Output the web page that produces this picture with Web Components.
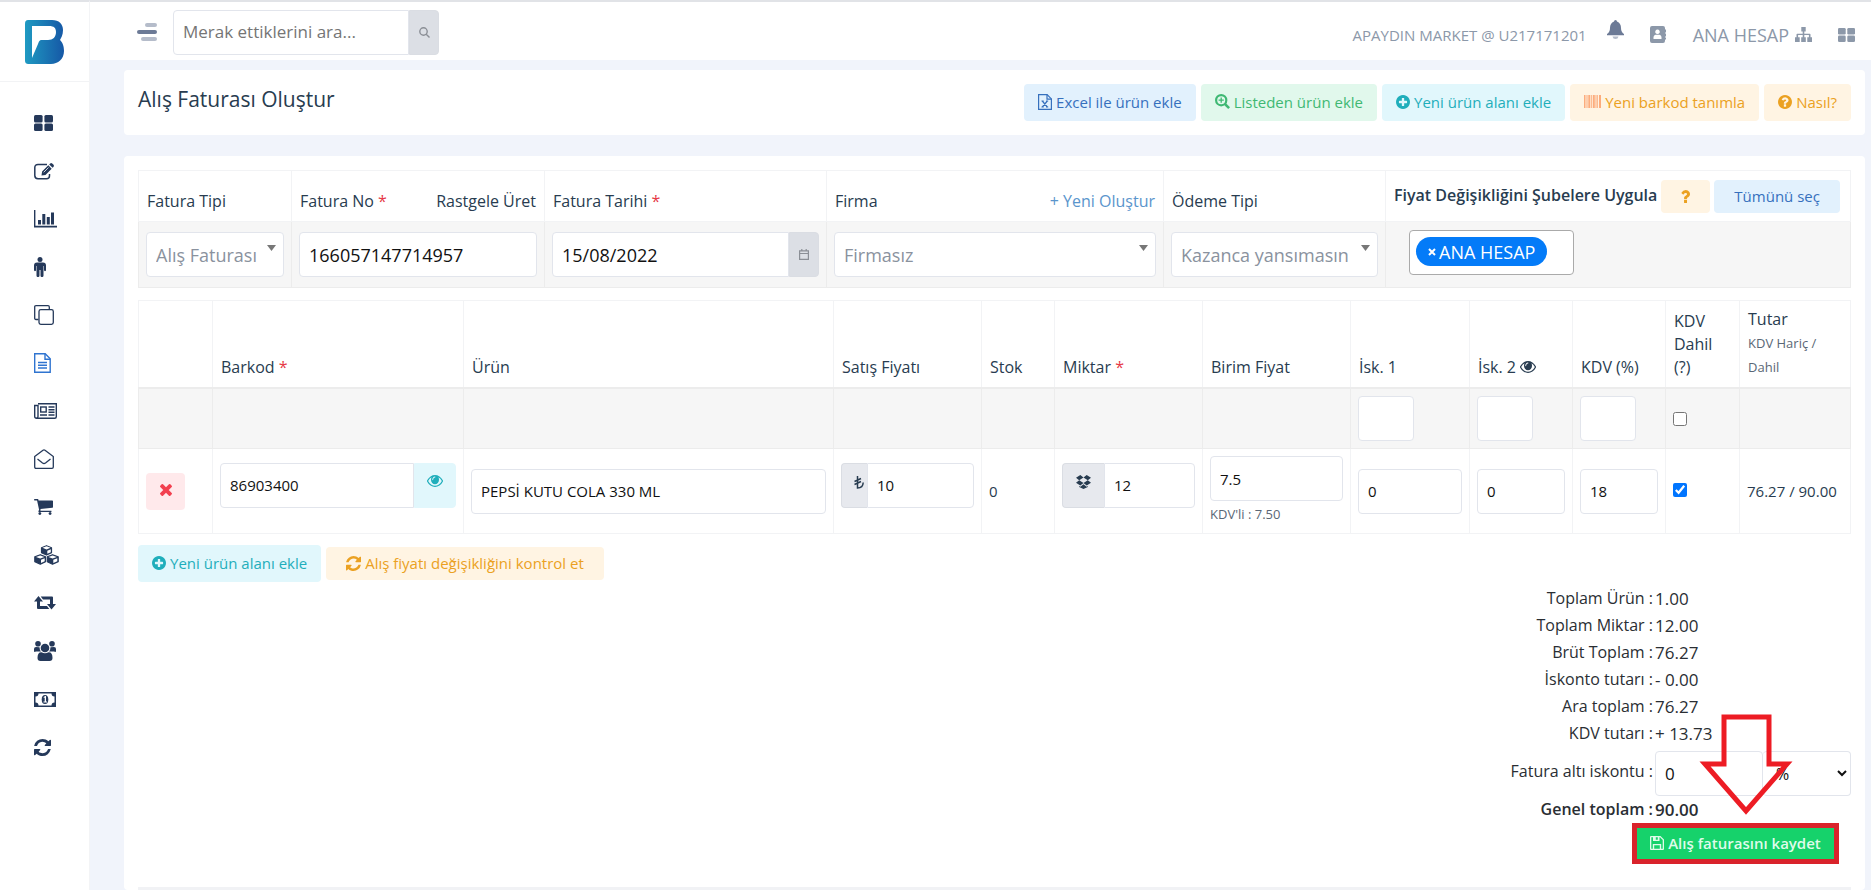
<!DOCTYPE html>
<html lang="tr">
<head>
<meta charset="utf-8">
<title>Alış Faturası Oluştur</title>
<style>
  body { margin: 0; background: #f1f4fb; color: #283c50; font-family: "Open Sans", "Noto Sans", sans-serif; font-size: 16px; line-height: 24px; }
</style>
</head>
<body>
<app-shell>
  <app-sidebar slot="sidebar"></app-sidebar>
  <app-header slot="header"></app-header>
  <page-card>
    <page-title></page-title>
  </page-card>
  <page-card>
    <invoice-head></invoice-head>
    <invoice-items></invoice-items>
    <invoice-actions></invoice-actions>
    <invoice-totals></invoice-totals>
  </page-card>
</app-shell>

<script>
/* Shared rules for form controls, included in each shadow root that needs them. */
const CONTROLS = `
  * { box-sizing: border-box; }
  input, select, button { font: inherit; color: inherit; margin: 0; }
  input[type=text], select { display: block; width: 100%; min-width: 0; height: 45px; padding: 0 9px; border: 1px solid #e2e5ec; border-radius: 4px; background: #fff; color: #111; outline: 0; }
  input[type=checkbox] { display: block; width: 14px; height: 14px; }
  .group { display: flex; }
  .group > .addon { flex: none; display: flex; align-items: center; justify-content: center; height: 45px; padding: 0; border: 1px solid #dadde3; background: #dcdfe5; color: #8b8f96; }
  .addon:last-child { border-radius: 4px; }
  .addon:first-child { border-radius: 4px; border-right: 0; }
  .group > :first-child { border-top-right-radius: 0; border-bottom-right-radius: 0; }
  .group > :last-child { border-top-left-radius: 0; border-bottom-left-radius: 0; }
`;
const TABLE = `
  table { width: 100%; border-collapse: collapse; table-layout: fixed; }
  th, td { border: 1px solid #f2f3f5; padding: 7px; text-align: left; }
  th { font-weight: 400; padding: 7px 8px 8px; vertical-align: bottom; color: #283c50; }
  i { font-style: normal; color: #e63946; }
`;

function define(name, css, html) {
  const template = document.createElement("template");
  template.innerHTML = `<style>${css}</style>${html}`;
  customElements.define(name, class extends HTMLElement {
    constructor() {
      super();
      this.attachShadow({ mode: "open" }).append(template.content.cloneNode(true));
    }
  });
}

/* name: [width, height, viewBox, markup] */
const REFRESH = '<path d="M1639 1056q0 5-1 7-64 268-268 434.5t-478 166.5q-146 0-282.500-55t-243.500-157l-129 129q-19 19-45 19t-45-19-19-45v-448q0-26 19-45t45-19h448q26 0 45 19t19 45-19 45l-137 137q71 66 161 102t187 36q134 0 250-65t186-179q11-17 53-117 8-23 30-23h192q13 0 22.500 9.500t9.500 22.500zm25-800v448q0 26-19 45t-45 19h-448q-26 0-45-19t-19-45 19-45l138-138q-148-137-349-137-134 0-250 65t-186 179q-11 17-53 117-8 23-30 23h-199q-13 0-22.500-9.500t-9.500-22.500v-7q65-268 270-434.500t480-166.500q146 0 284 55.500t245 156.500l130-129q19-19 45-19t45 19 19 45z"/>';
const EYE = '<path d="M1664 960q-152-236-381-353 61 104 61 225 0 185-131.500 316.500t-316.500 131.500-316.500-131.500-131.500-316.500q0-121 61-225-229 117-381 353 133 205 333.500 326.500t434.500 121.500 434.500-121.500 333.500-326.500zm-720-384q0-20-14-34t-34-14q-125 0-214.500 89.500t-89.500 214.500q0 20 14 34t34 14 34-14 14-34q0-86 61-147t147-61q20 0 34-14t14-34zm848 384q0 34-20 69-140 230-376.500 368.500t-499.500 138.500-499.500-139-376.500-368q-20-35-20-69t20-69q140-229 376.500-368t499.500-139 499.500 139 376.500 368q20 35 20 69z"/>';
const GRID = '<rect width="8.600" height="7.400" rx="1.500"/><rect x="10.400" width="8.600" height="7.400" rx="1.500"/><rect y="8.600" width="8.600" height="7.400" rx="1.500"/><rect x="10.400" y="8.600" width="8.600" height="7.400" rx="1.500"/>';
const FULL = "128 128 1536 1536";
const ICONS = {
  logo: [39, 44, "0 0 39 44", '<defs><linearGradient id="g" x1="0" y1="0" x2="1" y2="0"><stop offset="0" stop-color="#1f9ac2"/><stop offset="1" stop-color="#1658a6"/></linearGradient></defs><path fill="url(#g)" d="M3 0h24c7 0 11 4 11 10 0 5-2 8-3 10 2 2 4 5 4 11 0 8-6 13-13 13H4c-3 0-4-1-4-4V4c0-3 1-4 3-4z"/><path fill="#fff" d="M7 6h17c5 0 7 2 7 6 0 5-3 8-8 8h-6c-3 0-3 2-4 4L7 38z"/>'],
  menu: [20, 18, "0 0 20 18", '<rect x="8" width="12" height="4" rx="2" opacity=".5"/><rect y="7" width="20" height="4" rx="2"/><rect x="4" y="14" width="16" height="4" rx="2" opacity=".5"/>'],
  search: [11, 11, "0 0 11 11", '<g fill="none" stroke="currentColor" stroke-width="1.400"><circle cx="4.500" cy="4.500" r="3.700"/><path d="M7.200 7.200L10.500 10.500"/></g>'],
  grid: [19, 16, "0 0 19 16", GRID],
  gridSmall: [17, 14, "0 0 19 16", GRID],
  edit: [20, 17, "0 0 20 17", '<path fill="none" stroke="currentColor" stroke-width="1.500" d="M13 1.500H4C2 1.500.800 2.500.800 4.500v8C.800 14.500 2 15.700 4 15.700h8.500c2 0 3-1.200 3-3V11"/><path d="M7.500 12.500l.600-4L14.300 2.300l3.400 3.400-6.200 6.200zM15.200 1.400l1-1q1-.700 2 0l1.400 1.400q.700 1 0 2l-1 1z"/><path stroke="#fff" stroke-width=".800" d="M9.700 9.300L14.500 4.500"/>'],
  chart: [23, 18, "0 0 23 18", '<path d="M0 0h1.400v15.800H23V17.500H0zM4 10h3v4.500H4zM8.300 4h3v10.500h-3zM12.800 7h3v7.500h-3zM17 2.500h3v12h-3z"/>'],
  male: [12, 20, "0 0 12 20", '<circle cx="6" cy="2.500" r="2.500"/><path d="M3 5.500h6c2 0 3 1 3 3V13c0 1.600-2 1.600-2 0V9h-.500v9.500c0 2-3 2-3 0V13h-1v5.500c0 2-3 2-3 0V9H2v4c0 1.600-2 1.600-2 0V8.500c0-2 1-3 3-3z"/>'],
  copy: [20, 20, "0 0 20 20", '<g fill="none" stroke="currentColor" stroke-width="1.300"><rect x="5" y="4.700" width="14.300" height="14.600" rx="1.800"/><path d="M4.500 14.500H2c-1 0-1.300-.500-1.300-1.300V2C.700 1 1 .700 2 .700h12c1 0 1.300.500 1.300 1.300v2"/></g>'],
  file: [17, 20, "0 0 17 20", '<g fill="none" stroke="currentColor" stroke-width="1.400"><path d="M.700.700h10.500l5 5v13.500H.700z"/><path d="M11 .700v5.500h5.300M4 9.500h9M4 12.300h9M4 15h9"/></g>'],
  news: [23, 16, "0 0 23 16", '<g fill="none" stroke="currentColor" stroke-width="1.400"><path d="M4 .700h18.300v13q0 1.500-1.500 1.500H2.500Q.700 15.200.700 13.500V2.500H4v11q0 1.500-1.500 1.500"/><rect x="6.700" y="4" width="5.500" height="5"/><path d="M6 12h7M14.500 4h6M14.500 6.700h6M14.500 9.300h6M14.500 12h6"/></g>'],
  mail: [20, 20, "0 0 20 20", '<g fill="none" stroke="currentColor" stroke-width="1.300"><path d="M.700 7.500L9 1.200q1-.700 2 0l8.300 6.300V18q0 1.300-1.300 1.300H2Q.700 19.300.700 18z"/><path d="M3.500 10l5 4q1.500 1 3 0l5-4"/></g>'],
  cart: [19, 16, "64 256 1664 1408", '<path d="M704 1536q0 52-38 90t-90 38-90-38-38-90 38-90 90-38 90 38 38 90zm896 0q0 52-38 90t-90 38-90-38-38-90 38-90 90-38 90 38 38 90zm128-1088v512q0 24-16.500 42.500t-40.500 21.500l-1044 122q13 60 13 70 0 16-24 64h920q26 0 45 19t19 45-19 45-45 19h-1024q-26 0-45-19t-19-45q0-11 8-31.500t16-36 21.500-40 15.500-29.500l-177-823h-204q-26 0-45-19t-19-45 19-45 45-19h256q16 0 28.500 6.500t19.500 15.500 13 24.500 8 26 5.500 29.500 4.500 26h1201q26 0 45 19t19 45z"/>'],
  cubes: [25, 20, "0 0 25 20", '<g stroke="currentColor" stroke-width="1.200" stroke-linejoin="round"><path d="M12.500.700L17.500 2.700v5l-5 2.300-5-2.300v-5z"/><path d="M6.300 9.700l5.200 2v5l-5.200 2.500-5.500-2.500v-5z"/><path d="M18.500 9.700l5.700 2v5l-5.700 2.500-5.200-2.500v-5z"/></g><g fill="#fff"><path d="M12.500 1.300l4 1.500-4 1.700-4-1.700zM6.200 10.400l4.200 1.500-4.200 1.700-4.200-1.700zM18.600 10.400l4.200 1.500-4.200 1.700-4.200-1.700zM13.300 5.700l3.500-1.500v3l-3.500 1.600zM7 14.800l3.700-1.500v3L7 18zM19.300 14.800l4-1.500v3l-4 1.700z"/></g>'],
  retweet: [22, 14, "0 0 22 14", '<path d="M4.500 0L9 5.500H6V10h7l2.300 3H4Q3 13 3 12V5.500H0zM17.500 13.500L13 8h3V3.500H9L6.700.500H18q1 0 1 1V8h3z"/>'],
  users: [22, 20, "0 0 22 20", '<circle cx="4" cy="2.800" r="2.800"/><circle cx="18" cy="2.800" r="2.800"/><circle cx="11" cy="7" r="4.300"/><path d="M0 10V8q0-2 2-2l3.500.300q0 2.500 1.500 4.200H2Q0 11.500 0 10zM22 10V8q0-2-2-2l-3.500.300q0 2.500-1.500 4.200h5q2 1 2-.500zM3.500 17q0-6 4-5.800 3.500 2 7 0 4-.200 4 5.800 0 3-3 3h-9q-3 0-3-3z"/>'],
  money: [22, 15, "0 0 22 15", '<path fill-rule="evenodd" d="M0 0h22v15H0zM4.500 1.500Q4.500 4.500 1.500 4.500v6q3 0 3 3h13q0-3 3-3v-6q-3 0-3-3z"/><ellipse cx="11" cy="7.500" rx="3.300" ry="4.500"/><path fill="#fff" d="M9.300 5.500L11 4h1v5.500h1v1H9.500v-1h1.200V5.800z"/>'],
  refresh: [17, 17, FULL, REFRESH],
  refreshSmall: [15, 15, FULL, REFRESH],
  bell: [17, 19, "0 0 17 19", '<path d="M7 1.500Q7 0 8.500 0T10 1.500Q14 3 14 8q0 4 3 6v1.300H0V14q3-2 3-6 0-5 4-6.500z"/><path opacity=".5" d="M5.500 16.500h6q-.500 2.500-3 2.500t-3-2.500z"/>'],
  book: [16, 17, "0 0 16 17", '<path fill-rule="evenodd" d="M2 0h11q2 0 2 2v1.500h1v3h-1v1h1v3h-1v1h1v2h-1V15q0 2-2 2H2q-2 0-2-2V2Q0 0 2 0zM7.500 3.500a2.300 2.300 0 1 0 .010 0zM3.500 13h8q.300-4-2-4.300h-4Q3.200 9 3.500 13z"/>'],
  sitemap: [17, 15, "0 0 17 15", '<path d="M6.300 0h4.400v4.400H9.300v2.300h5.500q.700 0 .700.700v2.800H17V15h-4.700v-4.800h1.600V8.100H9.300v2.100h1.500V15H6.200v-4.800h1.500V8.100H3.100v2.100h1.600V15H0v-4.800h1.500V7.400q0-.700.700-.700h5.500V4.400H6.300z"/>'],
  excel: [14, 16, "0 0 14 16", '<g fill="none" stroke="currentColor" stroke-width="1.200"><path d="M.600.600h8.500l4.300 4.300v10.500H.600z"/><path d="M9 .600v4.500h4.500M4.300 7l5 6M9.300 7l-5 6M3.500 7h2.200M8 7h2.200M3.500 13h2.200M8 13h2.200"/></g>'],
  zoom: [15, 15, "0 0 15 15", '<g fill="none" stroke="currentColor"><circle cx="6.200" cy="6.200" r="5.100" stroke-width="2.200"/><path stroke-width="2.600" d="M9.800 9.800l4.300 4.300"/><path stroke-width="1.300" d="M6.200 3.600v5.200M3.600 6.200h5.200"/></g>'],
  plus: [14, 14, FULL, '<path d="M1344 960v-128q0-26-19-45t-45-19h-256v-256q0-26-19-45t-45-19h-128q-26 0-45 19t-19 45v256h-256q-26 0-45 19t-19 45v128q0 26 19 45t45 19h256v256q0 26 19 45t45 19h128q26 0 45-19t19-45v-256h256q26 0 45-19t19-45zm320-64q0 209-103 385.500t-279.500 279.500-385.500 103-385.500-103-279.500-279.500-103-385.500 103-385.500 279.500-279.500 385.500-103 385.500 103 279.500 279.500 103 385.500z"/>'],
  barcode: [17, 13, "0 0 17 13", '<path opacity=".8" fill="#fb9a63" d="M0 0h1.500v13H0zM2.500 0h1v13h-1zM4.300 0h2v13h-2zM7 0h.800v13H7zM8.800 0h2v13h-2zM11.500 0h1v13h-1zM13.200 0h.800v13h-.800zM15 0h2v13h-2z"/>'],
  question: [14, 14, FULL, '<path d="M1024 1376v-192q0-14-9-23t-23-9h-192q-14 0-23 9t-9 23v192q0 14 9 23t23 9h192q14 0 23-9t9-23zm256-672q0-88-55.500-163t-138.500-116-170-41q-243 0-371 213-15 24 8 42l132 100q7 6 19 6 16 0 25-12 53-68 86-92 34-24 86-24 48 0 85.500 26t37.500 59q0 38-20 61t-68 45q-63 28-115.500 86.500t-52.500 125.500v36q0 14 9 23t23 9h192q14 0 23-9t9-23q0-19 21.500-49.500t54.500-49.500q32-18 49-28.500t46-35 44.500-48 28-60.500 12.500-81zm384 192q0 209-103 385.500t-279.500 279.500-385.500 103-385.500-103-279.500-279.500-103-385.500 103-385.500 279.500-279.500 385.500-103 385.500 103 279.500 279.500 103 385.500z"/>'],
  mark: [9, 13, "506 384 774 1024", '<path d="M1024 1376v-192q0-14-9-23t-23-9h-192q-14 0-23 9t-9 23v192q0 14 9 23t23 9h192q14 0 23-9t9-23zm256-672q0-88-55.500-163t-138.500-116-170-41q-243 0-371 213-15 24 8 42l132 100q7 6 19 6 16 0 25-12 53-68 86-92 34-24 86-24 48 0 85.500 26t37.500 59q0 38-20 61t-68 45q-63 28-115.500 86.500t-52.500 125.500v36q0 14 9 23t23 9h192q14 0 23-9t9-23q0-19 21.500-49.500t54.500-49.500q32-18 49-28.500t46-35 44.500-48 28-60.500 12.500-81z"/>'],
  calendar: [10, 11, "0 0 10 11", '<path fill="none" stroke="currentColor" stroke-width="1.200" d="M.600 1.800h8.800v8.600H.600zM.600 4.500h8.800M2.800 0v2.500M7.200 0v2.500"/>'],
  eye: [16, 12, "0 384 1792 1152", EYE],
  times: [12, 12, "302 434 1188 1188", '<path transform="translate(0 68)" d="M1490 1322q0 40-28 68l-136 136q-28 28-68 28t-68-28l-294-294-294 294q-28 28-68 28t-68-28l-136-136q-28-28-28-68t28-68l294-294-294-294q-28-28-28-68t28-68l136-136q28-28 68-28t68 28l294 294 294-294q28-28 68-28t68 28l136 136q28 28 28 68t-28 68l-294 294 294 294q28 28 28 68z"/>'],
  cross: [8, 8, "0 0 8 8", '<path fill="none" stroke="currentColor" stroke-width="2" d="M1 1l6 6M7 1L1 7"/>'],
  lira: [10, 13, "0 0 10 13", '<path fill="none" stroke="currentColor" stroke-width="1.500" d="M3.500 0v12Q9 12 9.200 6.500M.500 5.500L7 2.500M.500 8.500L7 5.500"/>'],
  dropbox: [15, 14, "0 0 15 14", '<path d="M4.300 0L7.500 2.400 3.200 5.200 0 2.700zM10.700 0L15 2.700l-3.200 2.500L7.500 2.400zM0 7.700l3.200-2.500 4.300 2.700-3.200 2.500zM15 7.700l-3.200-2.500-4.300 2.700 3.200 2.500zM3.200 11l1.200.700 3.100-2.500 3.100 2.500 1.200-.700v.900L7.500 14l-4.300-2.100z"/>'],
  caret: [9, 6, "0 0 9 6", '<path d="M0 0h9L4.500 6z"/>'],
  save: [14, 14, "0 0 14 14", '<path fill-rule="evenodd" d="M1 0h9.500L14 3.500V13q0 1-1 1H1q-1 0-1-1V1q0-1 1-1zM1.300 1.300v11.400h1.500V8h8.400v4.700h1.500V4L10 1.300H9.500V5H3V1.300zM5.800 1.300v2.500h2V1.300zM4.200 9.300v3.400h5.600V9.300z"/>'],
  arrow: [100, 106, "0 0 100 106", '<path fill="none" stroke="#ed1c24" stroke-width="5" d="M28 5H73V52H91L50 99L9 52H28Z"/>']
};
customElements.define("ui-icon", class extends HTMLElement {
  constructor() {
    super();
    const [w, h, box, body] = ICONS[this.getAttribute("name")] || [0, 0, "0 0 1 1", ""];
    this.attachShadow({ mode: "open" }).innerHTML =
      `<style>:host{display:inline-flex;flex:none}svg{display:block;overflow:visible}</style>
       <svg width="${w}" height="${h}" viewBox="${box}" preserveAspectRatio="none" fill="currentColor" aria-hidden="true">${body}</svg>`;
  }
});

/* Pale tinted button; tone sets the colours, size="sm" the lower one. */
define("soft-button", `
  :host { display: inline-block; --bg: #e2f1fd; --fg: #3670bd; }
  :host([tone=green]) { --bg: #e1f8ec; --fg: #3fb873; }
  :host([tone=teal]) { --bg: #e1f7fc; --fg: #1faebb; }
  :host([tone=amber]) { --bg: #fff4e3; --fg: #eba122; }
  :host([tone=red]) { --bg: #ffe9eb; --fg: #f2404f; }
  button { display: flex; align-items: center; justify-content: center; gap: 4px; width: 100%; height: 37px; padding: 0 var(--pad, 14px) 2px; border: 0; border-radius: 4px; background: var(--bg); color: var(--fg); font: inherit; font-size: 15px; white-space: nowrap; cursor: pointer; }
  :host([size=sm]) button { height: 33px; padding: 0 20px 1px; }
`, `<button type="button"><slot></slot></button>`);

/* Drop-down with a small triangle above its middle line. */
customElements.define("select-field", class extends HTMLElement {
  constructor() {
    super();
    this.attachShadow({ mode: "open" }).innerHTML = `<style>${CONTROLS}
      :host { display: block; position: relative; }
      select { appearance: none; padding: 0 26px 0 9px; color: #8a929e; font-size: 18px; }
      ui-icon { position: absolute; right: 8px; top: 13px; color: #777; pointer-events: none; }
      </style><select aria-label="${this.getAttribute("label")}"><option>${this.getAttribute("value")}</option></select><ui-icon name="caret"></ui-icon>`;
  }
});

define("app-shell", `
  :host { display: grid; grid-template-columns: 90px minmax(0, 1fr); grid-template-rows: 60px 1fr; min-height: 100vh; }
  ::slotted([slot=sidebar]) { grid-row: 1 / 3; }
  main { display: flex; flex-direction: column; gap: 21px; padding: 10px 6px 0 34px; }
  ::slotted(page-card:last-child) { flex: 1; }
`, `<slot name="sidebar"></slot><slot name="header"></slot><main><slot></slot></main>`);

define("page-card", `
  :host { display: block; background: #fff; border-radius: 4px; padding: 14px 14px 0; }
`, `<slot></slot>`);

define("app-sidebar", `
  :host { display: block; background: #fff; color: #283c50; box-sizing: border-box; border-top: 2px solid #e1e3e7; border-right: 1px solid #f3f4f6; }
  nav { padding-top: 17px; }
  a { display: flex; align-items: center; height: 48px; padding-left: 34px; color: #25395a; }
  a.active { color: #2f74d0; }
  a.brand { height: 79px; padding-left: 25px; border-bottom: 1px solid #f2f3f5; }
`, `<a class="brand" href="#" aria-label="Ana sayfa"><ui-icon name="logo"></ui-icon></a>
  <nav>` + [["grid", "Panel"], ["edit", "Kayıt"], ["chart", "Raporlar"], ["male", "Müşteriler"], ["copy", "Belgeler"], ["file", "Faturalar"], ["news", "Haberler"], ["mail", "Mesajlar"], ["cart", "Satış"], ["cubes", "Ürünler"], ["retweet", "Transfer"], ["users", "Personel"], ["money", "Kasa"], ["refresh", "Eşitle"]]
  .map(([i, l]) => `<a href="#" aria-label="${l}"${i === "file" ? ' class="active"' : ""}><ui-icon name="${i}"></ui-icon></a>`).join("") + `</nav>`);

define("app-header", CONTROLS + `
  :host { display: flex; align-items: center; justify-content: space-between; box-sizing: border-box; border-top: 2px solid #e1e3e7; padding: 2px 16px 0 47px; background: #fff; color: #8c98a9; }
  .left, .right { display: flex; align-items: center; }
  .menu { display: flex; padding: 0; border: 0; background: none; color: #6c7a96; }
  .group { width: 266px; margin-left: 16px; }
  input[type=text] { padding-bottom: 2px; font-size: 17px; }
  input::placeholder { color: #757575; opacity: 1; }
  .addon { width: 30px; }
  .right { font-size: 15px; padding-top: 5px; }
  .bell { color: #6c7a96; margin: 0 26px 10px 20px; }
  .account { display: flex; align-items: center; gap: 6px; margin: 0 26px 0 27px; font-size: 18px; color: inherit; text-decoration: none; }
`, `<div class="left">
    <button class="menu" aria-label="Menü"><ui-icon name="menu"></ui-icon></button>
    <div class="group"><input type="text" aria-label="Arama" placeholder="Merak ettiklerini ara..."><button class="addon" aria-label="Ara"><ui-icon name="search"></ui-icon></button></div>
  </div>
  <div class="right"><span>APAYDIN MARKET @ U217171201</span><ui-icon class="bell" name="bell"></ui-icon><ui-icon name="book"></ui-icon>
    <a class="account" href="#">ANA HESAP<ui-icon name="sitemap"></ui-icon></a><ui-icon name="gridSmall"></ui-icon></div>`);

define("page-title", `
  :host { display: flex; justify-content: space-between; padding-bottom: 14px; }
  h1 { margin: 0; font-size: 21px; font-weight: 400; line-height: 30px; }
  .actions { display: flex; gap: 5px; }
`, `<h1>Alış Faturası Oluştur</h1>
  <div class="actions">
    <soft-button><ui-icon name="excel"></ui-icon>Excel ile ürün ekle</soft-button>
    <soft-button tone="green"><ui-icon name="zoom"></ui-icon>Listeden ürün ekle</soft-button>
    <soft-button tone="teal"><ui-icon name="plus"></ui-icon>Yeni ürün alanı ekle</soft-button>
    <soft-button tone="amber"><ui-icon name="barcode"></ui-icon>Yeni barkod tanımla</soft-button>
    <soft-button tone="amber"><ui-icon name="question"></ui-icon>Nasıl?</soft-button>
  </div>`);

define("invoice-head", CONTROLS + TABLE + `
  :host { display: block; }
  th { height: 51px; }
  th > div { display: flex; justify-content: space-between; }
  tbody td { height: 66px; background: #f6f6f6; border-color: #ececec; }
  input[type=text] { font-size: 18px; }
  .addon { width: 30px; }
  a { color: #5a95cc; text-decoration: none; }
  a.plain { color: inherit; }
  th > .apply { justify-content: flex-start; align-items: center; gap: 4px; font-weight: 600; white-space: nowrap; }
  .apply span { padding-bottom: 3px; }
  .apply soft-button { font-weight: 400; }
  .multi { display: flex; width: 165px; height: 45px; margin: 0 0 4px 16px; padding: 6px; border: 1px solid #aaa; border-radius: 4px; background: #fff; }
  .chip { display: flex; align-items: center; gap: 3px; height: 29px; padding: 0 12px; border: 0; border-radius: 15px; background: #047bf8; color: #fff; font-size: 18px; white-space: nowrap; }
`, `<table>
  <colgroup><col style="width:153px"><col style="width:253px"><col style="width:282px"><col><col style="width:222px"><col style="width:465px"></colgroup>
  <thead><tr>
    <th>Fatura Tipi</th>
    <th><div><label for="no">Fatura No <i>*</i></label><a class="plain" href="#">Rastgele Üret</a></div></th>
    <th><label for="date">Fatura Tarihi <i>*</i></label></th>
    <th><div>Firma<a href="#">+ Yeni Oluştur</a></div></th>
    <th>Ödeme Tipi</th>
    <th><div class="apply"><span>Fiyat Değişikliğini Şubelere Uygula</span><soft-button tone="amber" size="sm"><ui-icon name="mark"></ui-icon></soft-button><soft-button size="sm">Tümünü seç</soft-button></div></th>
  </tr></thead>
  <tbody><tr>
    <td><select-field label="Fatura Tipi" value="Alış Faturası"></select-field></td>
    <td><input type="text" id="no" value="166057147714957"></td>
    <td><div class="group"><input type="text" id="date" value="15/08/2022"><button class="addon" aria-label="Takvim"><ui-icon name="calendar"></ui-icon></button></div></td>
    <td><select-field label="Firma" value="Firmasız"></select-field></td>
    <td><select-field label="Ödeme Tipi" value="Kazanca yansımasın"></select-field></td>
    <td><div class="multi"><button class="chip"><ui-icon name="cross"></ui-icon>ANA HESAP</button></div></td>
  </tr></tbody></table>`);

define("invoice-items", CONTROLS + TABLE + `
  :host { display: block; margin-top: 12px; }
  thead th { border-bottom: 2px solid #ececec; line-height: 23px; }
  tr.bulk td { height: 60px; background: #f6f6f6; border-color: #ececec; }
  tr.item td { height: 84px; font-size: 15px; }
  .bulk input[type=text] { width: 56px; }
  small { font-size: 13px; color: #5a6776; }
  td small { display: block; line-height: 23px; margin-top: 2px; }
  .group { margin-bottom: 12px; }
  .group > .addon { background: #e7e9ee; color: #283c50; padding-bottom: 6px; }
  .group > .look { width: 42px; border-color: #e1f7fc; background: #e1f7fc; color: #1faebb; padding-bottom: 8px; }
  .group > .lira { width: 26px; justify-content: flex-end; padding: 0 3px 6px 0; }
  .box { width: 42px; }
  soft-button { width: 39px; --pad: 0; }
  .check { margin-bottom: 2px; }
`, `<table>
  <colgroup><col style="width:74px"><col style="width:251px"><col><col style="width:148px"><col style="width:73px"><col style="width:148px"><col style="width:148px"><col style="width:119px"><col style="width:103px"><col style="width:93px"><col style="width:74px"><col style="width:111px"></colgroup>
  <thead><tr>
    <th></th><th>Barkod <i>*</i></th><th>Ürün</th><th>Satış Fiyatı</th><th>Stok</th><th>Miktar <i>*</i></th><th>Birim Fiyat</th>
    <th>İsk. 1</th><th>İsk. 2 <ui-icon name="eye"></ui-icon></th><th>KDV (%)</th><th>KDV Dahil (?)</th><th>Tutar<br><small>KDV Hariç / Dahil</small></th>
  </tr></thead>
  <tbody>
  <tr class="bulk"><td></td><td></td><td></td><td></td><td></td><td></td><td></td>
    <td><input type="text" aria-label="Toplu İsk. 1"></td><td><input type="text" aria-label="Toplu İsk. 2"></td><td><input type="text" aria-label="Toplu KDV"></td>
    <td><input type="checkbox" aria-label="Tümünde KDV dahil"></td><td></td></tr>
  <tr class="item">
    <td><soft-button tone="red"><ui-icon name="times"></ui-icon></soft-button></td>
    <td><div class="group"><input type="text" aria-label="Barkod" value="86903400"><button class="addon look" aria-label="Göster"><ui-icon name="eye"></ui-icon></button></div></td>
    <td><input type="text" aria-label="Ürün" value="PEPSİ KUTU COLA 330 ML"></td>
    <td><div class="group"><span class="addon lira"><ui-icon name="lira"></ui-icon></span><input type="text" aria-label="Satış Fiyatı" value="10"></div></td>
    <td>0</td>
    <td><div class="group"><span class="addon box"><ui-icon name="dropbox"></ui-icon></span><input type="text" aria-label="Miktar" value="12"></div></td>
    <td><input type="text" aria-label="Birim Fiyat" value="7.5"><small>KDV'li : 7.50</small></td>
    <td><input type="text" aria-label="İsk. 1" value="0"></td>
    <td><input type="text" aria-label="İsk. 2" value="0"></td>
    <td><input type="text" aria-label="KDV (%)" value="18"></td>
    <td><input class="check" type="checkbox" aria-label="KDV Dahil" checked></td>
    <td>76.27 / 90.00</td>
  </tr></tbody></table>`);

define("invoice-actions", `
  :host { display: flex; align-items: center; gap: 5px; margin-top: 11px; }
`, `<soft-button tone="teal"><ui-icon name="plus"></ui-icon>Yeni ürün alanı ekle</soft-button>
  <soft-button tone="amber" size="sm"><ui-icon name="refreshSmall"></ui-icon>Alış fiyatı değişikliğini kontrol et</soft-button>`);

define("invoice-totals", CONTROLS + `
  :host { display: block; margin-top: 3px; color: #2a2e33; }
  dl { display: grid; grid-template-columns: 1fr 196px; column-gap: 2px; align-items: center; margin: 0; line-height: 27px; }
  dt { text-align: right; }
  dd { margin: 0; font-size: 17px; }
  .sum { font-weight: 600; }
  .discount { display: grid; grid-template-columns: 108px 1fr; margin-top: 4px; }
  .discount select { font-size: 16px; border-left-width: 0; }
  .save { position: relative; display: flex; justify-content: flex-end; padding-right: 12px; }
  .save button { display: flex; align-items: center; justify-content: center; gap: 4px; width: 207px; height: 41px; padding: 0 0 2px; border: 5px solid #d9232b; background: #16d26b; color: #dffbea; font-size: 15px; font-weight: 600; white-space: nowrap; }
  .pointer { position: absolute; right: 55px; bottom: 46px; pointer-events: none; }
  hr { height: 3px; margin: 23px 0 0; border: 0; background: #f1f2f5; }
`, `<dl>
    <dt>Toplam Ürün :</dt><dd>1.00</dd>
    <dt>Toplam Miktar :</dt><dd>12.00</dd>
    <dt>Brüt Toplam :</dt><dd>76.27</dd>
    <dt>İskonto tutarı :</dt><dd>- 0.00</dd>
    <dt>Ara toplam :</dt><dd>76.27</dd>
    <dt>KDV tutarı :</dt><dd>+ 13.73</dd>
    <dt><label for="disc">Fatura altı iskontu :</label></dt><dd class="discount"><input type="text" id="disc" value="0"><select aria-label="İskonto türü"><option>%</option></select></dd>
    <dt class="sum">Genel toplam :</dt><dd class="sum">90.00</dd>
  </dl>
  <div class="save"><button type="submit"><ui-icon name="save"></ui-icon>Alış faturasını kaydet</button><ui-icon class="pointer" name="arrow"></ui-icon></div>
  <hr>`);
</script>
</body>
</html>
